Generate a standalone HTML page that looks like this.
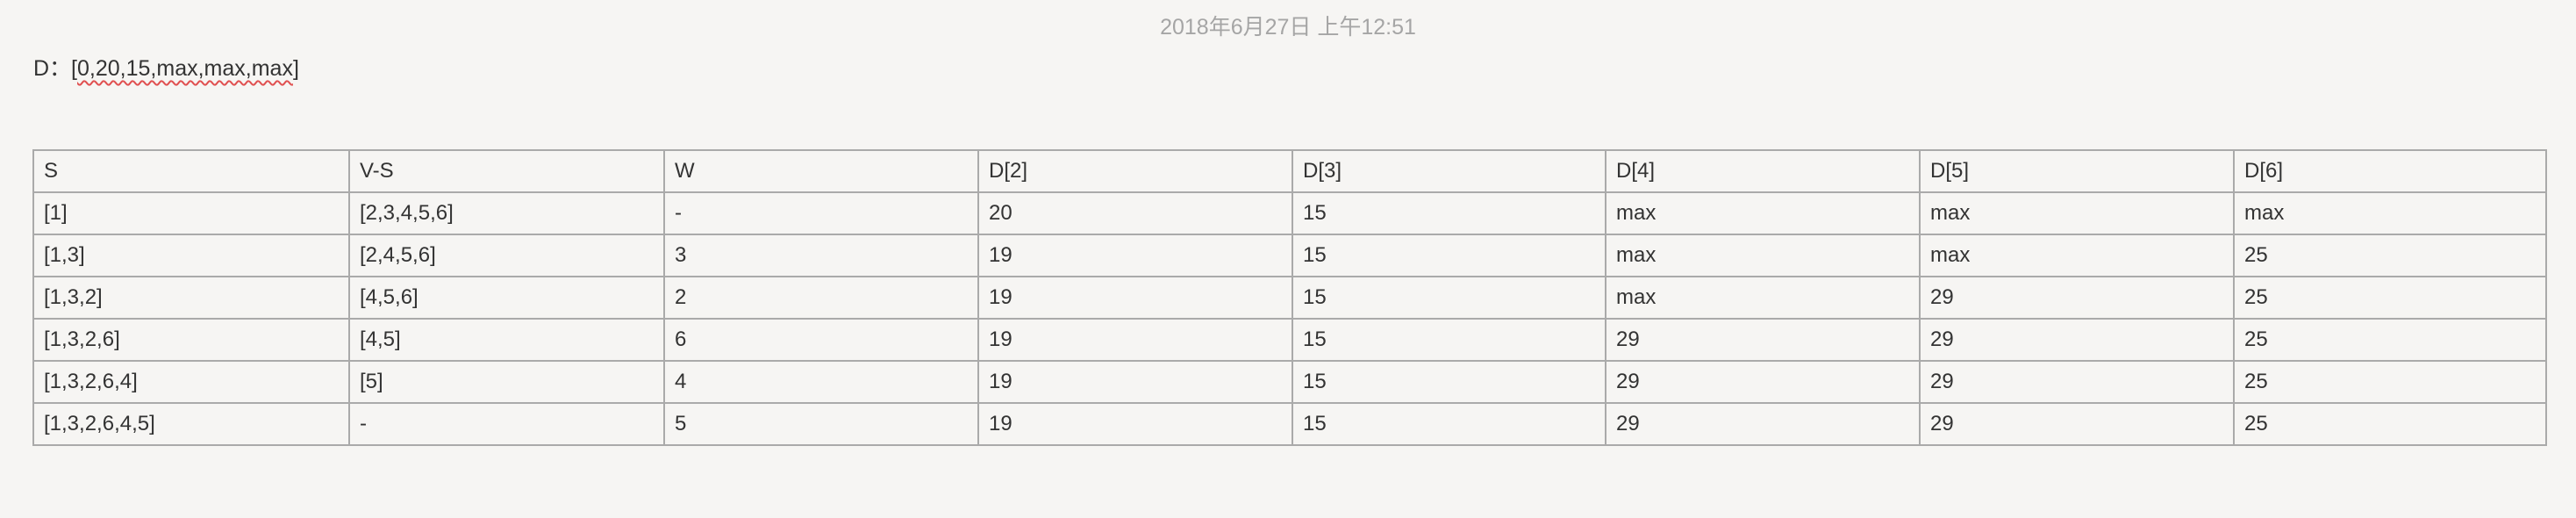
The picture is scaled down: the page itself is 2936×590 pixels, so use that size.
<!DOCTYPE html>
<html><head><meta charset="utf-8"><style>
html,body{margin:0;padding:0;}
body{width:2936px;height:590px;background:#f6f5f3;font-family:"Liberation Sans","Noto Sans CJK SC",sans-serif;color:#333;position:relative;overflow:hidden;}
.date{position:absolute;top:11px;left:0;width:2936px;text-align:center;font-size:25px;color:#a5a5a5;}
.d{position:absolute;left:38px;top:58px;font-size:25px;}
.sq{text-decoration:underline wavy #e05050;text-decoration-thickness:2px;text-underline-offset:5px;}
table{position:absolute;left:37px;top:170px;border-collapse:collapse;table-layout:fixed;width:2866px;}
td{border:2px solid #aaa;height:44px;padding:0 0 0 11px;font-size:24px;box-sizing:border-box;height:48px;white-space:nowrap;}
</style></head><body>
<div class="date">2018年6月27日 上午12:51</div>
<div class="d">D：[<span class="sq">0,20,15,max,max,max</span>]</div>
<table>
<colgroup><col style="width:360px"><col style="width:359px"><col style="width:358px"><col style="width:358px"><col style="width:357px"><col style="width:358px"><col style="width:358px"><col></colgroup>
<tr><td>S</td><td>V-S</td><td>W</td><td>D[2]</td><td>D[3]</td><td>D[4]</td><td>D[5]</td><td>D[6]</td></tr>
<tr><td>[1]</td><td>[2,3,4,5,6]</td><td>-</td><td>20</td><td>15</td><td>max</td><td>max</td><td>max</td></tr>
<tr><td>[1,3]</td><td>[2,4,5,6]</td><td>3</td><td>19</td><td>15</td><td>max</td><td>max</td><td>25</td></tr>
<tr><td>[1,3,2]</td><td>[4,5,6]</td><td>2</td><td>19</td><td>15</td><td>max</td><td>29</td><td>25</td></tr>
<tr><td>[1,3,2,6]</td><td>[4,5]</td><td>6</td><td>19</td><td>15</td><td>29</td><td>29</td><td>25</td></tr>
<tr><td>[1,3,2,6,4]</td><td>[5]</td><td>4</td><td>19</td><td>15</td><td>29</td><td>29</td><td>25</td></tr>
<tr><td>[1,3,2,6,4,5]</td><td>-</td><td>5</td><td>19</td><td>15</td><td>29</td><td>29</td><td>25</td></tr>
</table>
</body></html>
